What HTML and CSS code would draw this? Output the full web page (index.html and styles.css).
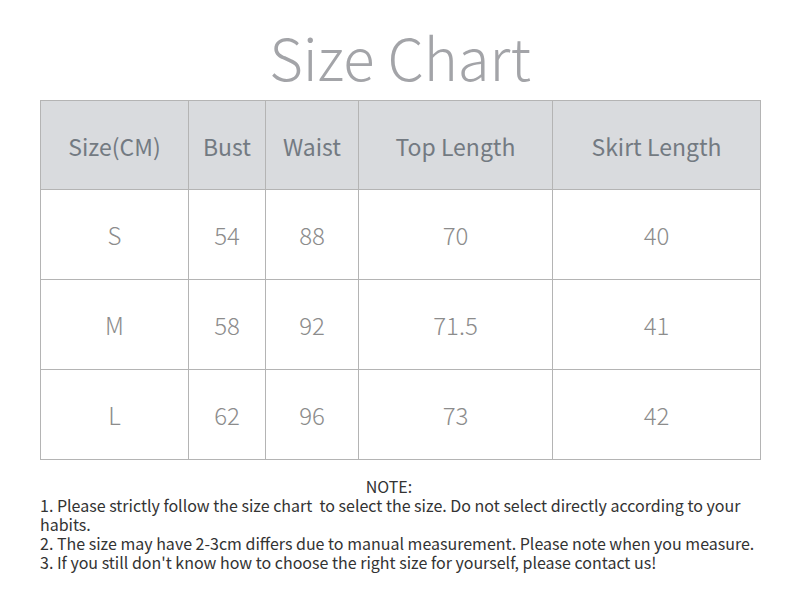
FILE: index.html
```html
<!DOCTYPE html>
<html>
<head>
<meta charset="utf-8">
<link rel="stylesheet" href="styles.css">
</head>
<body>
<div class="page">
  <h1 class="title">Size Chart</h1>
  <table class="chart">
    <colgroup>
      <col class="c1"><col class="c2"><col class="c3"><col class="c4"><col class="c5">
    </colgroup>
    <thead>
      <tr><th>Size(CM)</th><th>Bust</th><th>Waist</th><th>Top Length</th><th>Skirt Length</th></tr>
    </thead>
    <tbody>
      <tr><td>S</td><td>54</td><td>88</td><td>70</td><td>40</td></tr>
      <tr><td>M</td><td>58</td><td>92</td><td>71.5</td><td>41</td></tr>
      <tr><td>L</td><td>62</td><td>96</td><td>73</td><td>42</td></tr>
    </tbody>
  </table>
  <div class="note">
    <div class="note-title">NOTE:</div>
    <p>1. Please strictly follow the size chart&nbsp; to select the size. Do not select directly according to your habits.</p>
    <p>2. The size may have 2-3cm differs due to manual measurement. Please note when you measure.</p>
    <p>3. If you still don't know how to choose the right size for yourself, please contact us!</p>
  </div>
</div>
</body>
</html>
```
FILE: styles.css
```css
html, body {
  margin: 0;
  padding: 0;
  background: #ffffff;
}
body {
  font-family: "Noto Sans CJK SC", "Noto Sans", sans-serif;
}
.page {
  width: 800px;
  height: 600px;
  padding: 0 40px;
  box-sizing: border-box;
}
.title {
  margin: 0;
  padding-top: 21px;
  height: 100px;
  box-sizing: border-box;
  text-align: center;
  font-weight: 300;
  font-size: 58px;
  line-height: 70px;
  color: #a3a4a8;
}
.chart {
  width: 720px;
  border-collapse: collapse;
  table-layout: fixed;
}
.c1 { width: 148px; }
.c2 { width: 77px; }
.c3 { width: 93px; }
.c4 { width: 194px; }
.c5 { width: 208px; }
.chart th, .chart td {
  border: 1px solid #b4b4b4;
  text-align: center;
  padding: 0;
  box-sizing: border-box;
}
.chart th {
  height: 89px;
  padding-top: 2px;
  background: #d9dbde;
  font-weight: 400;
  font-size: 23px;
  color: #737a82;
}
.chart td {
  height: 90px;
  padding-top: 0;
  font-weight: 300;
  font-size: 24px;
  color: #8c8c8c;
}
.note {
  margin-top: 17px;
  font-size: 16px;
  line-height: 19px;
  color: #333333;
}
.note-title {
  text-align: center;
  padding-right: 22px;
}
.note p {
  margin: 0;
}
```
